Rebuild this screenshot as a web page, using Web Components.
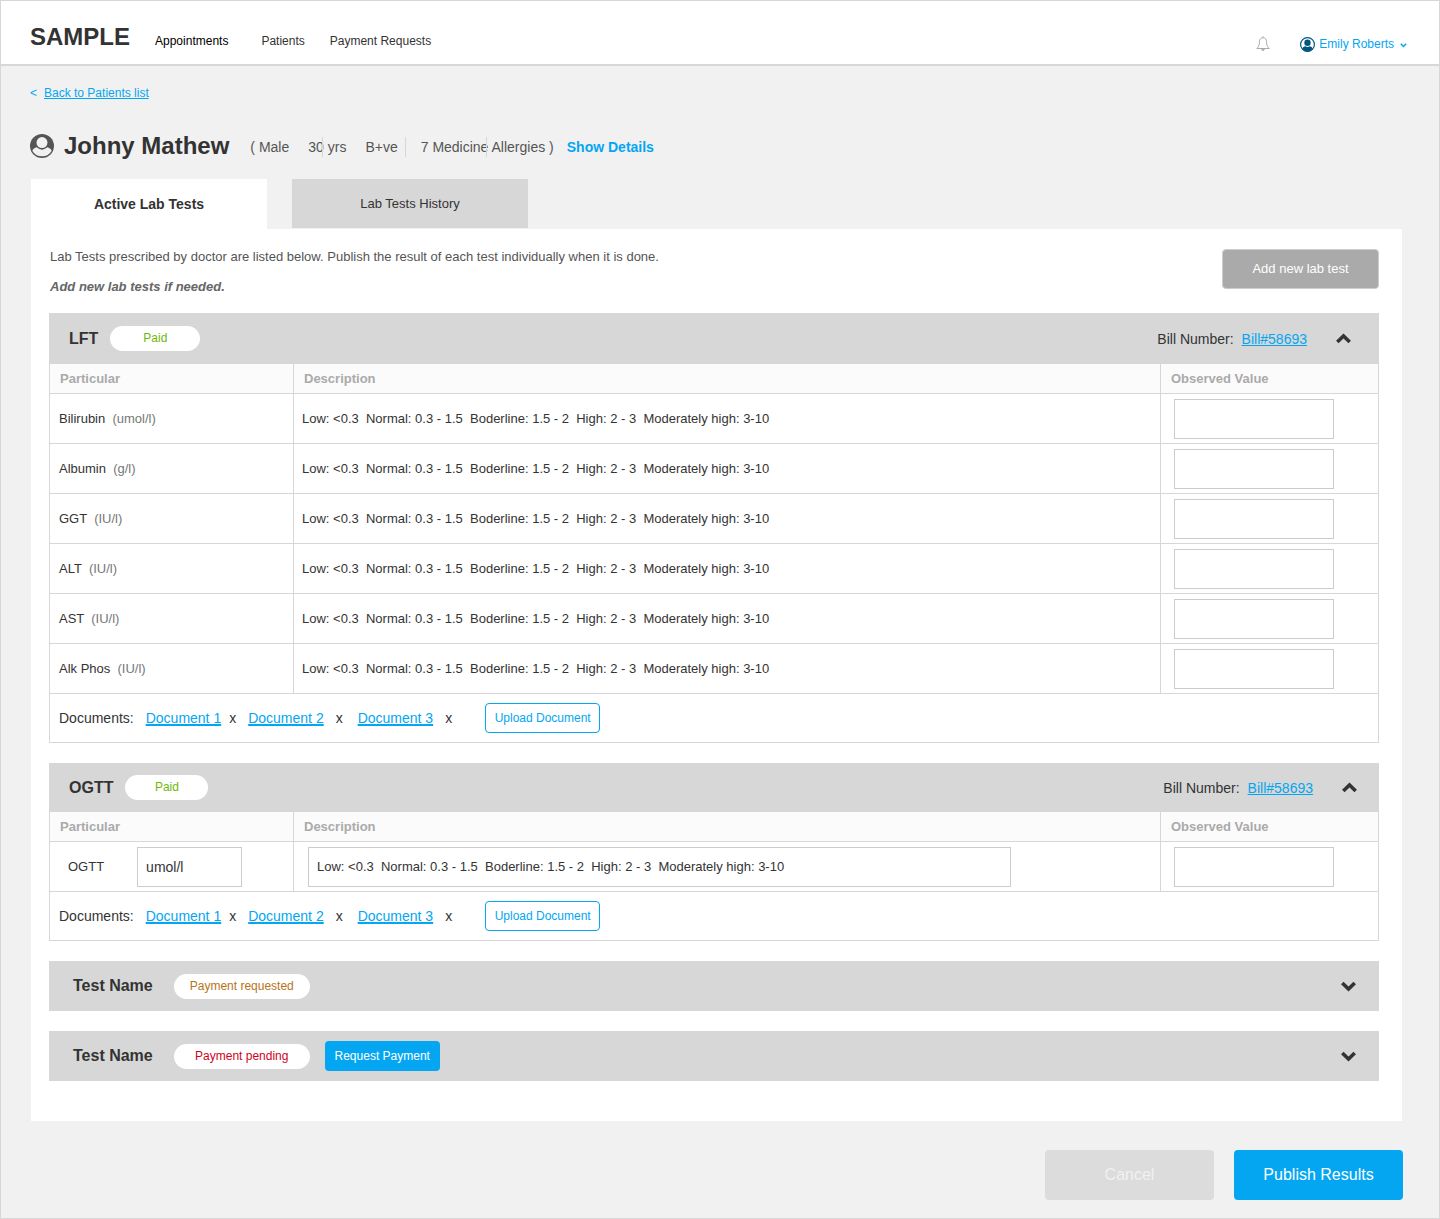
<!DOCTYPE html>
<html lang="en">
<head>
<meta charset="UTF-8">
<meta name="viewport" content="width=device-width, initial-scale=1.0">
<title>Lab Tests</title>
<style>
  :root {
    --blue: #04a6f1;
    --line: #d7d7d7;
    --text: #333;
  }

  body {
    margin: 0;
    font-family: "Liberation Sans", Arial, sans-serif;
    font-size: 13px;
    line-height: 16px;
    color: var(--text);
  }
</style>
</head>
<body>
<lab-page>
  <app-header slot="header" user="Emily Roberts"></app-header>
  <patient-summary></patient-summary>
  <tab-bar></tab-bar>
  <lab-panel>
    <lab-test name="LFT" status="paid" bill="Bill#58693" open style="--head-height: 51px; --badge-width: 90px; --head-end: 28px">
      <result-table></result-table>
      <document-list></document-list>
    </lab-test>
    <lab-test name="OGTT" status="paid" bill="Bill#58693" open style="--head-height: 49px; --badge-width: 83px; --head-end: 22px">
      <result-table editable></result-table>
      <document-list></document-list>
    </lab-test>
    <lab-test name="Test Name" status="requested"></lab-test>
    <lab-test name="Test Name" status="pending"></lab-test>
  </lab-panel>
  <page-actions slot="footer"></page-actions>
</lab-page>

<script>
const BASE = `
  * { box-sizing: border-box; }
  a { color: var(--blue); }
  button { font: inherit; cursor: pointer; margin: 0; }
  svg { display: block; }
`;

class BaseElement extends HTMLElement {
  constructor() {
    super();
    this.attachShadow({ mode: 'open' });
  }

  connectedCallback() {
    this.shadowRoot.innerHTML = `<style>${BASE}${this.styles()}</style>${this.markup()}`;
    this.init();
  }

  init() {}
}

class LabPage extends BaseElement {
  styles() {
    return `
      :host {
        display: flex;
        flex-direction: column;
        box-sizing: border-box;
        min-height: 100vh;
        border: 1px solid var(--line);
        background: #f1f1f1;
      }
      main { padding: 19px 37px 0 30px; }
      .back { display: flex; gap: 7px; margin-left: -1px; color: var(--blue); font-size: 12px; }
    `;
  }

  markup() {
    return `
      <slot name="header"></slot>
      <main>
        <div class="back"><span>&lt;</span><a href="#patients">Back to Patients list</a></div>
        <slot></slot>
      </main>
      <slot name="footer"></slot>
    `;
  }
}

class AppHeader extends BaseElement {
  styles() {
    return `
      :host { display: block; background: #fff; border-bottom: 2px solid var(--line); }
      header {
        display: flex;
        justify-content: space-between;
        align-items: flex-start;
        height: 63px;
        padding: 22px 32px 0 29px;
        font-size: 12px;
      }
      .left { display: flex; align-items: baseline; }
      .logo { font-size: 24px; line-height: 28px; font-weight: bold; margin-right: 25px; }
      nav { display: flex; gap: 25px; }
      nav a { color: var(--text); text-decoration: none; }
      nav a.current { color: #000; margin-right: 8px; }
      .right { display: flex; align-items: flex-start; gap: 30px; padding-top: 13px; }
      button { display: flex; align-items: center; border: 0; padding: 0; background: none; color: var(--blue); }
      .user { gap: 4px; line-height: 16px; }
      .user .arrow { margin: 2px 0 0 2px; }
    `;
  }

  markup() {
    return `
      <header>
        <div class="left">
          <span class="logo">SAMPLE</span>
          <nav>
            <a class="current" href="#appointments">Appointments</a>
            <a href="#patients">Patients</a>
            <a href="#payments">Payment Requests</a>
          </nav>
        </div>
        <div class="right">
          <button type="button" aria-label="Notifications">
            <svg width="14" height="15" viewBox="0 0 14 15" fill="none" stroke="#aaa" stroke-width="1">
              <path d="M7 .3v1.4M7 1.7C4.600 1.700 3.500 3.500 3.500 5.500C3.500 9 2.600 10.800.800 12.500H13.200C11.400 10.800 10.500 9 10.500 5.500C10.500 3.500 9.400 1.700 7 1.700Z"/>
              <path d="M5.700 13.200a1.300 1.200 0 0 0 2.600 0" fill="#aaa"/>
            </svg>
          </button>
          <button type="button" class="user">
            <svg width="15" height="15" viewBox="0 0 15 15">
              <circle cx="7.500" cy="7.500" r="6.900" fill="#fff" stroke="#04557e" stroke-width="1.200"/>
              <circle cx="7.500" cy="5.800" r="3.200" fill="#04557e"/>
              <path d="M2.300 12C2.600 10.300 4 9.600 5.300 9.300Q7.500 10.800 9.700 9.300C11 9.600 12.400 10.300 12.700 12Q10.500 14.500 7.500 14.500T2.300 12Z" fill="#04557e"/>
            </svg>
            <span>${this.getAttribute('user')}</span>
            <svg class="arrow" width="7" height="5" viewBox="0 0 7 5" fill="none" stroke="#04a6f1" stroke-width="1.500">
              <path d="M.8.8L3.500 3.500L6.200.8"/>
            </svg>
          </button>
        </div>
      </header>
    `;
  }
}

class PatientSummary extends BaseElement {
  styles() {
    return `
      :host { display: flex; align-items: center; margin: 31px 0 19px -1px; height: 28px; }
      h1 { margin: 0 21px 0 10px; font-size: 24px; line-height: 28px; }
      .details {
        position: relative;
        display: flex;
        gap: 19px;
        margin: 2px 13px 0 0;
        font-size: 14px;
        color: #555;
      }
      .details .wide { margin-left: 4px; }
      /* separators run across the text */
      i { position: absolute; top: -2px; width: 1px; height: 20px; background: var(--line); }
      i:nth-of-type(1) { left: 72px; }
      i:nth-of-type(2) { left: 155px; }
      i:nth-of-type(3) { left: 236px; }
      a { margin-top: 2px; font-size: 14px; font-weight: bold; text-decoration: none; }
    `;
  }

  markup() {
    return `
      <svg width="24" height="24" viewBox="0 0 24 24">
        <circle cx="12" cy="12" r="12" fill="#555"/>
        <path d="M2.300 16.800C3 14.800 4.800 13.900 6.800 13.300Q12 18 17.200 13.300C19.200 13.900 21 14.800 21.700 16.800Q18.600 22.300 12 22.300T2.300 16.800Z" fill="#f1f1f1"/>
        <circle cx="12" cy="8.800" r="6.300" fill="#555"/>
        <circle cx="12" cy="8.600" r="5.500" fill="#f1f1f1"/>
      </svg>
      <h1>Johny Mathew</h1>
      <div class="details">
        <span>( Male</span><span>30 yrs</span><span>B+ve</span>
        <span class="wide">7 Medicine Allergies )</span>
        <i></i><i></i><i></i>
      </div>
      <a href="#details">Show Details</a>
    `;
  }
}

class TabBar extends BaseElement {
  styles() {
    return `
      :host { display: block; }
      div { display: flex; align-items: flex-start; gap: 25px; }
      button { width: 236px; height: 49px; border: 0; padding: 0; background: var(--line); color: var(--text); }
      button[aria-selected="true"] { height: 50px; background: #fff; font-size: 14px; font-weight: bold; }
    `;
  }

  markup() {
    return `
      <div role="tablist">
        <button type="button" role="tab" aria-selected="true">Active Lab Tests</button>
        <button type="button" role="tab" aria-selected="false">Lab Tests History</button>
      </div>
    `;
  }

  init() {
    const tabs = this.shadowRoot.querySelectorAll('button');
    tabs.forEach(tab => {
      tab.addEventListener('click', () => {
        tabs.forEach(t => t.setAttribute('aria-selected', t === tab));
      });
    });
  }
}

class LabPanel extends BaseElement {
  styles() {
    return `
      :host { display: block; background: #fff; padding: 20px 23px 40px 18px; }
      .intro { display: flex; justify-content: space-between; align-items: flex-start; margin-bottom: 18px; }
      .text { padding-left: 1px; color: #555; }
      p { margin: 0; }
      p + p { margin-top: 14px; color: #666; font-weight: bold; font-style: italic; }
      button {
        width: 157px;
        height: 40px;
        border: 1px solid #ccc;
        border-radius: 4px;
        background: #aaa;
        color: #fff;
      }
      .tests { display: flex; flex-direction: column; gap: 20px; }
    `;
  }

  markup() {
    return `
      <div class="intro">
        <div class="text">
          <p>Lab Tests prescribed by doctor are listed below. Publish the result of each test individually when it is done.</p>
          <p>Add new lab tests if needed.</p>
        </div>
        <button type="button">Add new lab test</button>
      </div>
      <div class="tests"><slot></slot></div>
    `;
  }
}

class LabTest extends BaseElement {
  styles() {
    return `
      :host { display: block; }
      .head {
        display: flex;
        align-items: center;
        height: var(--head-height, 50px);
        padding: 0 var(--head-end, 23px) 0 24px;
        background: var(--line);
      }
      :host([open]) .head { padding-left: 20px; }
      h2 { margin: 0 21px 0 0; font-size: 16px; line-height: 20px; }
      :host([open]) h2 { margin-right: 12px; }
      .badge {
        width: var(--badge-width, 136px);
        border-radius: 13px;
        background: #fff;
        font-size: 12px;
        line-height: 25px;
        text-align: center;
      }
      .paid { color: #6fb80a; }
      .requested { color: #b8741a; }
      .pending { color: #d0021b; }
      .request {
        width: 115px;
        height: 30px;
        margin-left: 15px;
        border: 0;
        border-radius: 4px;
        padding: 0;
        background: var(--blue);
        color: #fff;
        font-size: 12px;
      }
      .bill { display: flex; gap: 8px; margin-left: auto; font-size: 14px; }
      .toggle { margin-left: auto; border: 0; padding: 0; background: none; }
      .bill + .toggle { margin-left: 29px; }
      :host([open]) .toggle svg { transform: rotate(180deg); }
      :host(:not([open])) slot { display: none; }
    `;
  }

  markup() {
    const labels = { paid: 'Paid', requested: 'Payment requested', pending: 'Payment pending' };
    const status = this.getAttribute('status');
    const bill = this.getAttribute('bill');
    return `
      <div class="head">
        <h2>${this.getAttribute('name')}</h2>
        <span class="badge ${status}">${labels[status]}</span>
        ${status === 'pending' ? '<button type="button" class="request">Request Payment</button>' : ''}
        ${bill ? `<div class="bill"><span>Bill Number:</span><a href="#bill">${bill}</a></div>` : ''}
        <button type="button" class="toggle" aria-label="Toggle test">
          <svg width="15" height="11" viewBox="0 0 15 11" fill="none" stroke="#333" stroke-width="3.600">
            <path d="M1.300 2L7.500 8L13.700 2"/>
          </svg>
        </button>
      </div>
      <slot></slot>
    `;
  }

  init() {
    this.shadowRoot.querySelector('.toggle').addEventListener('click', () => {
      this.toggleAttribute('open');
    });
  }
}

const RANGE = 'Low: <0.3  Normal: 0.3 - 1.5  Boderline: 1.5 - 2  High: 2 - 3  Moderately high: 3-10';
const LFT_ROWS = [
  ['Bilirubin', 'umol/l'],
  ['Albumin', 'g/l'],
  ['GGT', 'IU/l'],
  ['ALT', 'IU/l'],
  ['AST', 'IU/l'],
  ['Alk Phos', 'IU/l']
];

class ResultTable extends BaseElement {
  styles() {
    return `
      :host { display: block; }
      table {
        width: 100%;
        table-layout: fixed;
        border-collapse: separate;
        border-spacing: 0;
        border-left: 1px solid var(--line);
      }
      th, td { border: 0 solid var(--line); border-width: 0 1px 1px 0; text-align: left; }
      th { height: 30px; padding: 0 10px; background: #fbfbfb; color: #aaa; }
      th:first-child { width: 244px; }
      th:last-child { width: 218px; }
      td { height: 50px; padding: 0 8px; white-space: pre; }
      td:first-child { padding-left: 9px; }
      td:last-child { padding-left: 13px; }
      .unit { color: #777; }
      input {
        display: block;
        width: 160px;
        height: 40px;
        border: 1px solid #ccc;
        padding: 0 8px;
        background: #fff;
        color: var(--text);
        font: inherit;
      }
      .named { display: flex; align-items: center; gap: 33px; padding-left: 9px; }
      .named input { width: 105px; font-size: 14px; }
      .range { padding-left: 6px; }
      .range input { width: 100%; max-width: 703px; }
    `;
  }

  rows() {
    if (this.hasAttribute('editable')) {
      return `
        <tr>
          <td><div class="named"><label for="unit">OGTT</label><input id="unit" value="umol/l"></div></td>
          <td><div class="range"><input aria-label="Description" value="${RANGE.replace('<', '&lt;')}"></div></td>
          <td><input aria-label="OGTT observed value"></td>
        </tr>
      `;
    }
    return LFT_ROWS.map(([name, unit]) => `
      <tr>
        <td>${name}  <span class="unit">(${unit})</span></td>
        <td>${RANGE.replace('<', '&lt;')}</td>
        <td><input aria-label="${name} observed value"></td>
      </tr>
    `).join('');
  }

  markup() {
    return `
      <table>
        <thead><tr><th>Particular</th><th>Description</th><th>Observed Value</th></tr></thead>
        <tbody>${this.rows()}</tbody>
      </table>
    `;
  }
}

class DocumentList extends BaseElement {
  styles() {
    return `
      :host {
        display: flex;
        align-items: center;
        box-sizing: border-box;
        height: 49px;
        padding-left: 9px;
        border: 1px solid var(--line);
        border-top: 0;
        font-size: 14px;
      }
      .label { margin-right: 12px; }
      a { text-decoration-thickness: 2px; }
      .remove { border: 0; padding: 0; margin: 0 12px; background: none; color: var(--text); line-height: 16px; }
      .first { margin-left: 8px; }
      .mid { margin-right: 15px; }
      .last { margin-right: 33px; }
      .upload {
        width: 115px;
        height: 30px;
        border: 1px solid var(--blue);
        border-radius: 4px;
        padding: 0;
        background: #fff;
        color: var(--blue);
        font-size: 12px;
      }
    `;
  }

  markup() {
    return `
      <span class="label">Documents:</span>
      <a href="#doc1">Document 1</a><button type="button" class="remove first">x</button>
      <a href="#doc2">Document 2</a><button type="button" class="remove mid">x</button>
      <a href="#doc3">Document 3</a><button type="button" class="remove last">x</button>
      <button type="button" class="upload">Upload Document</button>
    `;
  }
}

class PageActions extends BaseElement {
  styles() {
    return `
      :host { display: flex; justify-content: flex-end; gap: 20px; padding: 29px 36px 18px; }
      button {
        width: 169px;
        height: 50px;
        border: 0;
        border-radius: 4px;
        background: var(--blue);
        color: #fff;
        font-size: 16px;
      }
      .cancel { background: #dcdcdc; color: #f1f1f1; }
    `;
  }

  markup() {
    return `
      <button type="button" class="cancel">Cancel</button>
      <button type="button">Publish Results</button>
    `;
  }
}

customElements.define('lab-page', LabPage);
customElements.define('app-header', AppHeader);
customElements.define('patient-summary', PatientSummary);
customElements.define('tab-bar', TabBar);
customElements.define('lab-panel', LabPanel);
customElements.define('lab-test', LabTest);
customElements.define('result-table', ResultTable);
customElements.define('document-list', DocumentList);
customElements.define('page-actions', PageActions);
</script>
</body>
</html>
